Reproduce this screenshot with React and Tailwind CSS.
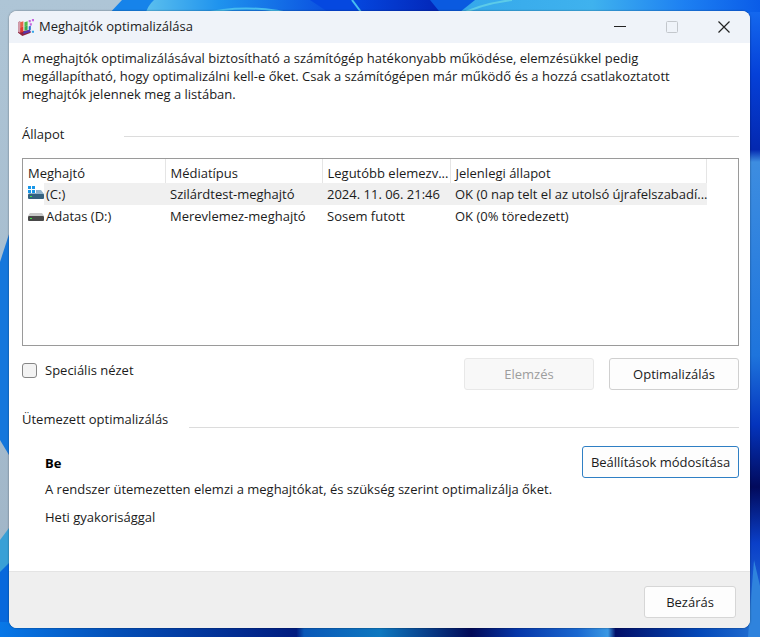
import { useState } from 'react'

const COLUMNS = ['Meghajtó', 'Médiatípus', 'Legutóbb elemezv...', 'Jelenlegi állapot']

const DRIVES = [
  {
    id: 'c',
    name: '(C:)',
    media: 'Szilárdtest-meghajtó',
    lastRun: '2024. 11. 06. 21:46',
    status: 'OK (0 nap telt el az utolsó újrafelszabadí...',
    system: true,
  },
  {
    id: 'd',
    name: 'Adatas (D:)',
    media: 'Merevlemez-meghajtó',
    lastRun: 'Sosem futott',
    status: 'OK (0% töredezett)',
    system: false,
  },
]

const BUTTON = 'h-8 rounded-[3px] border bg-[#fdfdfd] text-[#1b1b1b]'

function Wallpaper() {
  return (
    <svg
      className="absolute inset-0 h-full w-full"
      viewBox="0 0 760 637"
      preserveAspectRatio="none"
      aria-hidden="true"
    >
      <defs>
        <linearGradient id="sky" x1="0" y1="0" x2="0" y2="1">
          <stop offset="0" stopColor="#aec5d6" />
          <stop offset="1" stopColor="#9fb4c6" />
        </linearGradient>
        <linearGradient id="top" gradientUnits="userSpaceOnUse" x1="145" y1="0" x2="330" y2="0">
          <stop offset="0" stopColor="#5cc0ee" />
          <stop offset="0.4" stopColor="#1f93ee" />
          <stop offset="1" stopColor="#0a4fe0" />
        </linearGradient>
        <linearGradient id="petal" gradientUnits="userSpaceOnUse" x1="455" y1="0" x2="760" y2="0">
          <stop offset="0" stopColor="#35a8ea" />
          <stop offset="0.45" stopColor="#3fb2ee" />
          <stop offset="0.75" stopColor="#1d80f2" />
          <stop offset="1" stopColor="#0a5ce8" />
        </linearGradient>
        <linearGradient id="deep" gradientUnits="userSpaceOnUse" x1="350" y1="0" x2="440" y2="0">
          <stop offset="0" stopColor="#0548e0" />
          <stop offset="1" stopColor="#0326b8" />
        </linearGradient>
        <linearGradient id="right" x1="0" y1="0" x2="0" y2="1">
          <stop offset="0" stopColor="#1468ee" />
          <stop offset="0.1" stopColor="#0540d8" />
          <stop offset="0.22" stopColor="#0428b0" />
          <stop offset="0.24" stopColor="#3d8de0" />
          <stop offset="0.55" stopColor="#1e74dc" />
          <stop offset="0.66" stopColor="#0434bd" />
          <stop offset="0.76" stopColor="#020a5c" />
          <stop offset="0.85" stopColor="#0a3fc8" />
          <stop offset="1" stopColor="#2f83dd" />
        </linearGradient>
        <linearGradient id="bottom" x1="0" y1="0" x2="1" y2="0">
          <stop offset="0" stopColor="#0878e8" />
          <stop offset="0.15" stopColor="#0450b8" />
          <stop offset="0.39" stopColor="#011c80" />
          <stop offset="0.4" stopColor="#0a58b8" />
          <stop offset="0.5" stopColor="#0e78c0" />
          <stop offset="0.62" stopColor="#020a58" />
          <stop offset="0.68" stopColor="#0636a8" />
          <stop offset="0.76" stopColor="#1a68d0" />
          <stop offset="0.8" stopColor="#3a98e4" />
          <stop offset="0.81" stopColor="#020f68" />
          <stop offset="0.92" stopColor="#0448b8" />
          <stop offset="1" stopColor="#2371d4" />
        </linearGradient>
      </defs>
      <rect width="760" height="637" fill="url(#sky)" />
      <path d="M107 16 122 0H400V16Z" fill="#1683ea" />
      <path d="M145 16Q147 6 154 0H400V16Z" fill="url(#top)" />
      <path d="M200 14Q250 2 300 16" stroke="#46bdf0" strokeWidth="2" fill="none" />
      <path d="M310 0H480V16H334Z" fill="url(#deep)" />
      <path d="M352 0 364 16" stroke="#46bdf0" strokeWidth="2" />
      <path d="M430 0H476L456 16H443Z" fill="#0a5ae0" />
      <path d="M455 16 475 0H760V16Z" fill="url(#petal)" />
      <path d="M457 16Q480 4 512 0" stroke="#5ccbe8" strokeWidth="2" fill="none" />
      <rect x="745" y="12" width="15" height="625" fill="url(#right)" />
      <path d="M0 262 12 225V460L0 440Z" fill="#1577dc" />
      <path d="M0 540 12 524V637H0Z" fill="#39a0d6" />
      <path d="M0 572 12 560V637H0Z" fill="#0868dc" />
      <rect y="622" width="760" height="15" fill="url(#bottom)" />
      <path d="M754 560 760 586V637H748Z" fill="#2f83dd" />
    </svg>
  )
}

function DefragIcon() {
  return (
    <svg className="h-[17px] w-[17px]" viewBox="0 0 16 16" aria-hidden="true">
      <path d="M1 3 3 2V12L12 10 13 13 5 16 1 13Z" fill="#8e2440" />
      <path d="M1 3 3 2V13L1 12Z" fill="#d3a0ae" />
      <path d="M3 3 6 2V7L3 8Z" fill="#e8604a" />
      <path d="M7 3 10 2V6L7 7Z" fill="#56b848" />
      <path d="M3 8 6 7V12L3 13Z" fill="#e23b30" />
      <path d="M7 7 10 6V10L7 11Z" fill="#3cae4c" />
      <path d="M11 7 13 6V10L11 11Z" fill="#2a6fd0" />
      <path d="M6 12 12 10 13 12 6 14Z" fill="#5436b4" />
      <path d="M11 1h2v2h-2zM14 0h2v2h-2zM12 4h2v2h-2z" fill="#c868e0" />
      <path d="M14 11h2v2h-2z" fill="#36a6e8" />
    </svg>
  )
}

function DriveIcon({ system }) {
  return (
    <svg className="h-4 w-4 shrink-0" viewBox="0 0 16 16" aria-hidden="true">
      <path d={system ? 'M2 4H13L16 8V9H0Z' : 'M2 5H14L16 8H0Z'} fill={system ? '#8fb2cb' : '#c9c9c9'} />
      <rect y="8" width="16" height="5" rx="1" fill={system ? '#34617f' : '#484848'} />
      <rect x="2" y="10" width="2" height="1" fill="#3ee04a" />
      {system && (
        <>
          <rect width="8" height="7" fill="#fff" />
          <path d="M0 0h3v3H0zM4 0h3v3H4zM0 4h3v3H0zM4 4h3v3H4z" fill="#1796e8" />
        </>
      )}
    </svg>
  )
}

export default function App() {
  const [selected, setSelected] = useState('c')
  const [advanced, setAdvanced] = useState(false)

  return (
    <div className="relative flex min-h-screen flex-col overflow-hidden pt-[11px] pr-[10px] pb-[9px] pl-[9px] font-['Open_Sans','Noto_Sans',sans-serif] text-[13px] leading-[18px] text-[#1b1b1b]">
      <Wallpaper />

      <main className="relative flex flex-1 flex-col overflow-hidden rounded-lg bg-white shadow-[0_0_2px_#00000080]">
        <header className="flex h-8 items-center bg-[#eff3f9] pl-2">
          <DefragIcon />
          <h1 className="ml-[5px] flex-1 pb-0.5">Meghajtók optimalizálása</h1>
          <button type="button" aria-label="Kis méret" className="grid h-8 w-[52px] place-items-center">
            <svg className="h-3 w-3" viewBox="0 0 12 12">
              <path d="M0 5.5h12" stroke="#222" />
            </svg>
          </button>
          <button type="button" aria-label="Teljes méret" disabled className="grid h-8 w-[52px] place-items-center">
            <svg className="h-3 w-3" viewBox="0 0 12 12" fill="none">
              <rect x="0.5" y="0.5" width="11" height="11" rx="1" stroke="#c3c7cc" />
            </svg>
          </button>
          <button type="button" aria-label="Ablak bezárása" className="grid h-8 w-[52px] place-items-center">
            <svg className="h-3 w-3" viewBox="0 0 12 12">
              <path d="M0.5 0.5l11 11M11.5 0.5l-11 11" stroke="#222" strokeWidth="1.2" />
            </svg>
          </button>
        </header>

        <div className="flex flex-1 flex-col pr-[11px] pl-[13px]">
          <p className="mt-1.5 max-w-[660px]">
            A meghajtók optimalizálásával biztosítható a számítógép hatékonyabb működése, elemzésükkel pedig
            megállapítható, hogy optimalizálni kell-e őket. Csak a számítógépen már működő és a hozzá csatlakoztatott
            meghajtók jelennek meg a listában.
          </p>

          <div className="mt-[22px] flex items-center">
            <h2 className="w-[102px]">Állapot</h2>
            <div className="mt-1 h-px flex-1 bg-[#dcdcdc]" />
          </div>

          {/* Meghajtók listája */}
          <div className="mt-[15px] h-[188px] border border-[#9a9a9a] pr-[31px]">
            <table className="w-full table-fixed text-left">
              <colgroup>
                <col className="w-[142px]" />
                <col className="w-[157px]" />
                <col className="w-[128px]" />
                <col />
              </colgroup>
              <thead>
                <tr className="h-6">
                  {COLUMNS.map((label) => (
                    <th key={label} className="border-r border-[#e5e5e5] pt-1 pl-[5px] font-normal whitespace-nowrap">
                      {label}
                    </th>
                  ))}
                </tr>
              </thead>
              <tbody>
                {DRIVES.map((drive) => (
                  <tr
                    key={drive.id}
                    onClick={() => setSelected(drive.id)}
                    className={selected === drive.id ? 'h-[22px] bg-[#f0f0f0]' : 'h-[22px]'}
                  >
                    <td className="bg-white pl-[5px]">
                      <span className="flex items-center">
                        <DriveIcon system={drive.system} />
                        <span className={selected === drive.id ? 'flex-1 bg-[#f0f0f0] py-0.5 pl-0.5' : 'flex-1 py-0.5 pl-0.5'}>
                          {drive.name}
                        </span>
                      </span>
                    </td>
                    <td className="pl-[5px] whitespace-nowrap">{drive.media}</td>
                    <td className="pl-[5px] whitespace-nowrap">{drive.lastRun}</td>
                    <td className="pl-[5px] whitespace-nowrap">{drive.status}</td>
                  </tr>
                ))}
              </tbody>
            </table>
          </div>

          <div className="mt-3 flex items-center">
            <label className="mb-2 flex items-center gap-2">
              <input
                type="checkbox"
                checked={advanced}
                onChange={(e) => setAdvanced(e.target.checked)}
                className="h-[15px] w-[15px] appearance-none rounded-[3px] border border-[#868686] bg-[#f3f3f3] checked:bg-[#0067c0]"
              />
              Speciális nézet
            </label>
            <button type="button" disabled className="ml-auto h-8 w-[130px] rounded-[3px] border border-[#e8e8e8] bg-[#f8f8f8] text-[#9d9d9d]">
              Elemzés
            </button>
            <button type="button" className={`${BUTTON} ml-[15px] w-[130px] border-[#d0d0d0]`}>
              Optimalizálás
            </button>
          </div>

          <div className="mt-5 flex items-end">
            <h2 className="w-[167px]">Ütemezett optimalizálás</h2>
            <div className="h-px flex-1 bg-[#dcdcdc]" />
          </div>

          <div className="mt-[18px] flex items-start pl-[23px]">
            <div className="flex-1 pt-2">
              <p className="font-bold text-black">Be</p>
              <p className="mt-2">A rendszer ütemezetten elemzi a meghajtókat, és szükség szerint optimalizálja őket.</p>
              <p className="mt-2.5">Heti gyakorisággal</p>
            </div>
            <button type="button" className={`${BUTTON} w-[157px] border-[#2f7fc4]`}>
              Beállítások módosítása
            </button>
          </div>
        </div>

        <footer className="flex h-[57px] items-center justify-end border-t border-[#e4e4e4] bg-[#efefef] pt-1 pr-[14px]">
          <button type="button" className={`${BUTTON} w-[92px] border-[#d6d6d6]`}>
            Bezárás
          </button>
        </footer>
      </main>
    </div>
  )
}
